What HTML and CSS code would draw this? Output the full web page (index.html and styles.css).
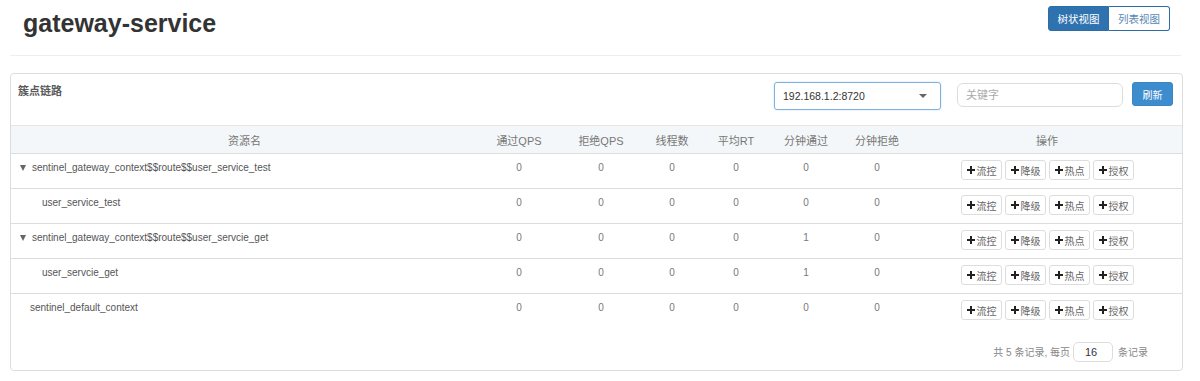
FILE: index.html
```html
<!DOCTYPE html>
<html lang="zh">
<head>
<meta charset="utf-8">
<title>gateway-service</title>
<link rel="stylesheet" href="styles.css">
</head>
<body>
<div class="page-header">
  <h1 class="title">gateway-service</h1>
  <div class="toggle">
    <button class="tg active">树状视图</button>
    <button class="tg">列表视图</button>
  </div>
</div>

<div class="panel">
  <div class="panel-heading">
    <div class="panel-title">簇点链路</div>
    <div class="tools">
      <div class="select"><span>192.168.1.2:8720</span><i class="caret"></i></div>
      <div class="search">关键字</div>
      <button class="btn-refresh">刷新</button>
    </div>
  </div>
  <table class="grid">
    <colgroup>
      <col class="c-name"><col class="c-a"><col class="c-b"><col class="c-c"><col class="c-d"><col class="c-e"><col class="c-f"><col class="c-ops">
    </colgroup>
    <thead>
      <tr><th>资源名</th><th>通过QPS</th><th>拒绝QPS</th><th>线程数</th><th>平均RT</th><th>分钟通过</th><th>分钟拒绝</th><th>操作</th></tr>
    </thead>
    <tbody>
      <tr>
        <td class="name lvl0"><span class="tri"></span>sentinel_gateway_context$$route$$user_service_test</td>
        <td>0</td><td>0</td><td>0</td><td>0</td><td>0</td><td>0</td>
        <td class="ops"><div class="opsrow"><button class="op"><svg viewBox="0 0 8 8"><path d="M3 0h2v3h3v2H5v3H3V5H0V3h3z"/></svg>流控</button><button class="op"><svg viewBox="0 0 8 8"><path d="M3 0h2v3h3v2H5v3H3V5H0V3h3z"/></svg>降级</button><button class="op"><svg viewBox="0 0 8 8"><path d="M3 0h2v3h3v2H5v3H3V5H0V3h3z"/></svg>热点</button><button class="op"><svg viewBox="0 0 8 8"><path d="M3 0h2v3h3v2H5v3H3V5H0V3h3z"/></svg>授权</button></div></td>
      </tr>
      <tr>
        <td class="name lvl1">user_service_test</td>
        <td>0</td><td>0</td><td>0</td><td>0</td><td>0</td><td>0</td>
        <td class="ops"><div class="opsrow"><button class="op"><svg viewBox="0 0 8 8"><path d="M3 0h2v3h3v2H5v3H3V5H0V3h3z"/></svg>流控</button><button class="op"><svg viewBox="0 0 8 8"><path d="M3 0h2v3h3v2H5v3H3V5H0V3h3z"/></svg>降级</button><button class="op"><svg viewBox="0 0 8 8"><path d="M3 0h2v3h3v2H5v3H3V5H0V3h3z"/></svg>热点</button><button class="op"><svg viewBox="0 0 8 8"><path d="M3 0h2v3h3v2H5v3H3V5H0V3h3z"/></svg>授权</button></div></td>
      </tr>
      <tr>
        <td class="name lvl0"><span class="tri"></span>sentinel_gateway_context$$route$$user_servcie_get</td>
        <td>0</td><td>0</td><td>0</td><td>0</td><td>1</td><td>0</td>
        <td class="ops"><div class="opsrow"><button class="op"><svg viewBox="0 0 8 8"><path d="M3 0h2v3h3v2H5v3H3V5H0V3h3z"/></svg>流控</button><button class="op"><svg viewBox="0 0 8 8"><path d="M3 0h2v3h3v2H5v3H3V5H0V3h3z"/></svg>降级</button><button class="op"><svg viewBox="0 0 8 8"><path d="M3 0h2v3h3v2H5v3H3V5H0V3h3z"/></svg>热点</button><button class="op"><svg viewBox="0 0 8 8"><path d="M3 0h2v3h3v2H5v3H3V5H0V3h3z"/></svg>授权</button></div></td>
      </tr>
      <tr>
        <td class="name lvl1">user_servcie_get</td>
        <td>0</td><td>0</td><td>0</td><td>0</td><td>1</td><td>0</td>
        <td class="ops"><div class="opsrow"><button class="op"><svg viewBox="0 0 8 8"><path d="M3 0h2v3h3v2H5v3H3V5H0V3h3z"/></svg>流控</button><button class="op"><svg viewBox="0 0 8 8"><path d="M3 0h2v3h3v2H5v3H3V5H0V3h3z"/></svg>降级</button><button class="op"><svg viewBox="0 0 8 8"><path d="M3 0h2v3h3v2H5v3H3V5H0V3h3z"/></svg>热点</button><button class="op"><svg viewBox="0 0 8 8"><path d="M3 0h2v3h3v2H5v3H3V5H0V3h3z"/></svg>授权</button></div></td>
      </tr>
      <tr>
        <td class="name lvlx">sentinel_default_context</td>
        <td>0</td><td>0</td><td>0</td><td>0</td><td>0</td><td>0</td>
        <td class="ops"><div class="opsrow"><button class="op"><svg viewBox="0 0 8 8"><path d="M3 0h2v3h3v2H5v3H3V5H0V3h3z"/></svg>流控</button><button class="op"><svg viewBox="0 0 8 8"><path d="M3 0h2v3h3v2H5v3H3V5H0V3h3z"/></svg>降级</button><button class="op"><svg viewBox="0 0 8 8"><path d="M3 0h2v3h3v2H5v3H3V5H0V3h3z"/></svg>热点</button><button class="op"><svg viewBox="0 0 8 8"><path d="M3 0h2v3h3v2H5v3H3V5H0V3h3z"/></svg>授权</button></div></td>
      </tr>
    </tbody>
  </table>
  <div class="pager">
    <span>共 5 条记录, 每页</span>
    <div class="pagesize">16</div>
    <span>条记录</span>
  </div>
</div>
</body>
</html>
```
FILE: styles.css
```css
* { box-sizing: border-box; }
html, body {
  margin: 0;
  padding: 0;
  background: #fff;
  font-family: "Liberation Sans", Arial, "Noto Sans CJK SC", sans-serif;
  color: #555;
}
button { font-family: inherit; }

.page-header {
  margin: 0 19px 0 10px;
  height: 56px;
  border-bottom: 1px solid #eeeeee;
  display: flex;
  justify-content: space-between;
  align-items: flex-start;
  padding: 0 11px 0 13px;
}
.title {
  margin: 8px 0 0;
  font-size: 25px;
  line-height: 30px;
  font-weight: bold;
  color: #333;
}
.toggle {
  display: flex;
  margin-top: 6px;
}
.tg {
  width: 61px;
  height: 25px;
  border: 1px solid #2e6da4;
  background: #fff;
  color: #5a87b5;
  font-size: 10.5px;
  padding: 0;
  border-radius: 0 3px 3px 0;
  border-left: none;
}
.tg.active {
  background: #2f72b0;
  color: #fff;
  border: 1px solid #2e6da4;
  border-radius: 3px 0 0 3px;
}

.panel {
  margin: 17px 17px 0 10px;
  border: 1px solid #dddddd;
  border-radius: 4px;
  background: #fff;
}
.panel-heading {
  height: 51px;
  display: flex;
  justify-content: space-between;
  align-items: flex-start;
  padding: 9px 9px 0 7px;
}
.panel-title {
  font-size: 11px;
  font-weight: bold;
  line-height: 16px;
  color: #5a5a5a;
}
.tools {
  display: flex;
  align-items: flex-start;
  margin-top: -1px;
}
.select {
  width: 167px;
  height: 28px;
  border: 1px solid #7eb0dd;
  border-radius: 3px;
  display: flex;
  align-items: center;
  justify-content: space-between;
  padding: 0 13px 0 8px;
  font-size: 10.5px;
  color: #333;
  box-shadow: 0 0 2px rgba(102,175,233,0.4);
}
.caret {
  width: 0;
  height: 0;
  border-left: 4px solid transparent;
  border-right: 4px solid transparent;
  border-top: 4px solid #666;
}
.search {
  margin: 1px 0 0 16px;
  width: 166px;
  height: 24px;
  border: 1px solid #dddddd;
  border-radius: 6px;
  font-size: 11px;
  color: #aaa;
  line-height: 22px;
  padding-left: 8px;
}
.btn-refresh {
  margin-left: 9px;
  width: 41px;
  height: 24px;
  border: 1px solid #3a85c4;
  background: #3d8dce;
  color: #fff;
  font-size: 10px;
  border-radius: 3px;
  padding: 0;
}

.grid {
  width: 100%;
  border-collapse: collapse;
  table-layout: fixed;
}
.c-name { width: 467px; }
.c-a { width: 82px; }
.c-b { width: 82px; }
.c-c { width: 60px; }
.c-d { width: 68px; }
.c-e { width: 72px; }
.c-f { width: 70px; }
.c-ops { width: 270px; }

.grid thead th {
  height: 28px;
  background: #f4f7f9;
  border-top: 1px solid #e6e6e6;
  font-weight: normal;
  font-size: 11px;
  color: #777;
  text-align: center;
  padding: 0;
}
.grid tbody td {
  height: 35px;
  border-top: 1px solid #dddddd;
  text-align: center;
  vertical-align: top;
  font-size: 10px;
  line-height: 14px;
  color: #777;
  padding: 7px 0 0;
}
.grid tbody td.name {
  text-align: left;
  color: #555;
}
.lvl0 { padding-left: 9px !important; }
.lvl1 { padding-left: 31px !important; }
.lvlx { padding-left: 19px !important; }
.tri {
  display: inline-block;
  width: 0;
  height: 0;
  border-left: 3.5px solid transparent;
  border-right: 3.5px solid transparent;
  border-top: 6px solid #666;
  margin: 4px 6px 0 0;
  vertical-align: top;
}
.grid tbody td.ops {
  padding-top: 6px;
}
.opsrow {
  display: flex;
  justify-content: center;
  gap: 3px;
}
.op {
  height: 20px;
  width: 41px;
  border: 1px solid #dddddd;
  border-radius: 3px;
  background: #fff;
  display: flex;
  align-items: center;
  gap: 2px;
  padding: 0 0 0 5px;
  font-size: 10px;
  color: #666;
}
.op svg {
  width: 8px;
  height: 8px;
  fill: #222;
  flex: none;
}

.pager {
  display: flex;
  justify-content: flex-end;
  align-items: center;
  padding: 13px 34px 8px 0;
  font-size: 10px;
  color: #888;
}
.pagesize {
  width: 40px;
  height: 20px;
  border: 1px solid #dddddd;
  border-radius: 5px;
  margin: 0 5px 0 3px;
  font-size: 11px;
  color: #333;
  line-height: 18px;
  padding-left: 11px;
}
```
